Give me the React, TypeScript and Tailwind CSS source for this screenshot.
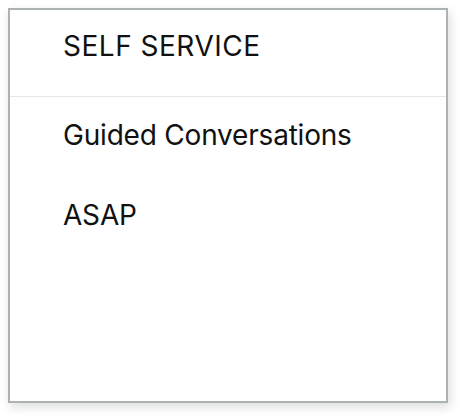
export default function App() {
  const items = ["Guided Conversations", "ASAP"];
  return (
    <div className="w-[460px] h-[416px] bg-white p-[8px] font-['Inter',sans-serif] text-[#111]">
      <div className="w-[440px] h-[395px] border-2 border-[#adb2b5] bg-white shadow-[2px_4px_10px_rgba(0,0,0,0.14)] flex flex-col">
        <div className="h-[87px] pt-[19px] pl-[53px] border-b border-[#e3e7ea]">
          <div className="text-[28px] leading-[34px] tracking-[0.5px]">SELF SERVICE</div>
        </div>
        <div className="pt-[21px] pl-[53px] flex flex-col gap-[46px]">
          {items.map((item) => (
            <div key={item} className="text-[28px] leading-[34px] tracking-[-0.2px]">
              {item}
            </div>
          ))}
        </div>
      </div>
    </div>
  );
}
